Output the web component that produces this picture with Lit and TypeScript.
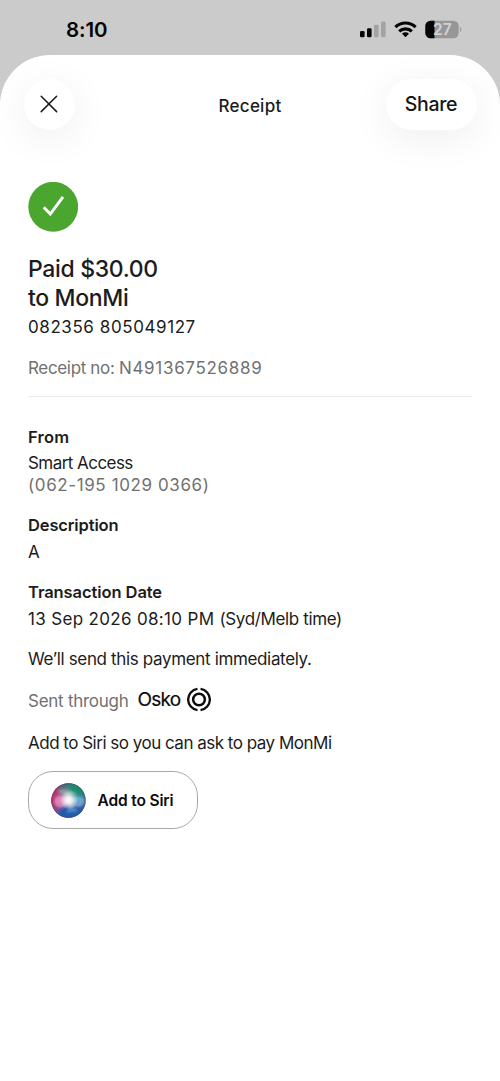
import { LitElement, html, css } from "lit";
import { customElement } from "lit/decorators.js";

@customElement("status-bar")
class StatusBar extends LitElement {
  static styles = css`
    :host { display: flex; justify-content: space-between; align-items: flex-start; height: 55px; box-sizing: border-box; padding: 0 38px 0 66px; }
    .time { font-size: 20.5px; line-height: 24px; margin-top: 18px; font-weight: 600; letter-spacing: -0.1px; color: #050505; }
    svg { display: block; margin-top: 18px; }
    .pct { font: 600 15.5px Inter, "Liberation Sans", sans-serif; fill: #d2d2d2; }
  `;
  render() {
    return html`
      <span class="time">8:10</span>
      <svg width="102" height="24" viewBox="360 18 102 24">
        <rect x="360" y="31" width="4.6" height="6.3" rx="1.3" fill="#050505" />
        <rect x="367" y="28.3" width="4.6" height="9" rx="1.3" fill="#050505" />
        <rect x="374" y="24.8" width="4.6" height="12.5" rx="1.3" fill="#a3a3a3" />
        <rect x="381" y="21.5" width="4.6" height="15.8" rx="1.3" fill="#a3a3a3" />
        <g fill="none" stroke="#050505" stroke-width="3.2">
          <path d="M395.4 27.2a14.3 14.3 0 0 1 20.2 0" />
          <path d="M399.2 31.4a8.9 8.9 0 0 1 12.6 0" />
        </g>
        <path d="M405.5 37.3l-3.5-3.5a4.95 4.95 0 0 1 7 0z" fill="#050505" />
        <rect x="425.3" y="20.7" width="33.4" height="17.6" rx="5.2" fill="#979797" />
        <path d="M434.5 20.7h-4a5.2 5.2 0 0 0-5.2 5.2v7.2a5.2 5.2 0 0 0 5.2 5.2h4z" fill="#050505" />
        <path d="M460 26.8c2 .8 2 4.6 0 5.4z" fill="#a3a3a3" />
        <text class="pct" x="442.3" y="35.2" text-anchor="middle">27</text>
      </svg>
    `;
  }
}

@customElement("siri-orb")
class SiriOrb extends LitElement {
  static styles = css`
    :host { display: block; width: 35px; height: 35px; }
    svg { display: block; }
  `;
  render() {
    return html`
      <svg width="35" height="35" viewBox="0 0 35 35">
        <defs>
          <clipPath id="c"><circle cx="17.5" cy="17.5" r="17.2" /></clipPath>
          <filter id="b" x="-50%" y="-50%" width="200%" height="200%"><feGaussianBlur stdDeviation="2.2" /></filter>
          <filter id="s" x="-50%" y="-50%" width="200%" height="200%"><feGaussianBlur stdDeviation="0.8" /></filter>
          <radialGradient id="g"><stop offset="0" stop-color="#fff" /><stop offset=".35" stop-color="#fff" stop-opacity=".85" /><stop offset="1" stop-color="#fff" stop-opacity="0" /></radialGradient>
        </defs>
        <g clip-path="url(#c)">
          <rect width="35" height="35" fill="#47577f" />
          <g filter="url(#b)">
            <path d="M0 4h10l3 12-6 14H0z" fill="#a83a72" />
            <path d="M13-2h22v16l-14 2z" fill="#1f8a72" />
            <path d="M6 25l12-3 17 2v14H8z" fill="#205cab" />
            <path d="M7 5l9 0 3 8-9-1z" fill="#7d7f8c" />
            <ellipse cx="28" cy="18" rx="6" ry="4" fill="#62a9dc" />
            <ellipse cx="9.5" cy="18" rx="6" ry="5" fill="#e06cab" />
          </g>
          <g filter="url(#s)">
            <path d="M6 9c7-4 15-3 22 3-7-2-11 0-11 5-2-4-6-7-11-8z" fill="#9fcfc6" opacity=".45" />
            <path d="M4 19c0-8 10-7 14-1 4 4 11 5 13 0 0 7-8 7-13 2-4 6-14 6-14-1z" fill="#e9b4de" opacity=".35" />
            <circle cx="9.5" cy="18.5" r="5" fill="none" stroke="#f0b3d8" stroke-width="1" opacity=".5" />
            <path d="M18 18l9 10-11 2z" fill="#80b4e4" opacity=".5" />
            <ellipse cx="27.5" cy="18.5" rx="4.5" ry="3.5" fill="none" stroke="#a6d8f2" stroke-width="1" opacity=".6" />
          </g>
          <circle cx="18" cy="17" r="9.5" fill="url(#g)" />
        </g>
        <circle cx="17.5" cy="17.5" r="16.7" fill="none" stroke="#55406e" stroke-opacity=".45" stroke-width="1" />
        <path d="M1.3 20A16.5 16.5 0 0 1 8.5 3.7" fill="none" stroke="#c22a5a" stroke-width="1.3" />
      </svg>
    `;
  }
}

@customElement("app-root")
class AppRoot extends LitElement {
  static styles = css`
    :host { display: block; height: 1081px; background: #cbcbcb; font-family: Inter, "Liberation Sans", sans-serif; color: #1c1c1c; overflow: hidden; }
    .sheet { background: #fff; height: 1026px; border-radius: 50px 50px 0 0; overflow: hidden; }
    .bar { display: grid; grid-template-columns: 91px 1fr 91px; align-items: center; height: 50px; padding: 23.5px 23.5px 0; }
    button { font-family: inherit; border: 0; background: #fff; padding: 0; margin: 0; display: flex; align-items: center; justify-content: center; color: #151515; }
    .close { width: 51px; height: 51px; border-radius: 50%; box-shadow: 0 8px 40px rgba(0,0,0,.07); }
    .share { width: 91px; height: 51px; border-radius: 26px; font-size: 19.5px; font-weight: 500; letter-spacing: -0.3px; box-shadow: 0 8px 40px rgba(0,0,0,.07); }
    .share span { margin-top: -1px; }
    .title { text-align: center; font-size: 17px; font-weight: 500; margin: 3.5px 0 0; line-height: 22px; letter-spacing: 0.25px; }
    .body { padding: 53px 28px 0; }
    .ok { display: block; margin-bottom: 23px; }
    h1 { margin: 0; font-size: 23px; line-height: 29px; font-weight: 500; letter-spacing: -0.34px; }
    p, h2 { margin: 0; font-size: 17px; line-height: 22px; font-weight: 400; white-space: nowrap; }
    h2 { font-weight: 600; font-size: 16.5px; }
    .muted { color: #717171; }
    .acct { margin-top: 3px; letter-spacing: 0.58px; }
    .receipt { margin-top: 19px; padding-bottom: 17px; border-bottom: 1px solid #e9e9e9; letter-spacing: -0.34px; }
    .digits { letter-spacing: 0.69px; }
    .from { margin-top: 29.5px; letter-spacing: 0.2px; }
    .value { margin-top: 4.5px; }
    .smart { margin-top: 4px; letter-spacing: -0.55px; }
    .num { letter-spacing: 0.6px; }
    .next { margin-top: 18.5px; }
    .desc { margin-top: 18px; letter-spacing: -0.14px; }
    .trans { letter-spacing: -0.08px; }
    .date { letter-spacing: 0.33px; }
    .zone { letter-spacing: -0.37px; }
    .send { letter-spacing: -0.35px; }
    .sent { display: flex; align-items: center; margin-top: 19.5px; }
    .through { letter-spacing: -0.26px; }
    .osko { font-size: 19px; font-weight: 400; color: #0c0c0c; -webkit-text-stroke: 0.2px #0c0c0c; margin-left: 9px; line-height: 22px; margin-top: -1px; letter-spacing: -0.75px; }
    .mark { margin: -3px 0 0 6px; }
    .ask { margin-top: 20.5px; letter-spacing: -0.5px; }
    .siri { width: 170px; height: 58px; box-sizing: border-box; border: 1px solid #a9a9a9; border-radius: 25px; margin-top: 17px; gap: 12px; font-size: 15.5px; font-weight: 600; color: #0b0b0b; letter-spacing: -0.15px; }
    .siri span { margin: 1px 2px 0 0; }
  `;
  render() {
    return html`
      <status-bar></status-bar>
      <main class="sheet">
        <header class="bar">
          <button class="close" aria-label="Close">
            <svg width="18" height="18" viewBox="0 0 18 18"><path d="M1.2 1.2L16.6 16.6M16.6 1.2L1.2 16.6" stroke="#1a1a1a" stroke-width="1.5" stroke-linecap="round" /></svg>
          </button>
          <h2 class="title">Receipt</h2>
          <button class="share"><span>Share</span></button>
        </header>
        <section class="body">
          <svg class="ok" width="50" height="50" viewBox="0 0 50 50">
            <circle cx="25.2" cy="24.8" r="24.9" fill="#4aa62e" />
            <path d="M15.7 25.2l6.6 6.9L35 14.9" fill="none" stroke="#fff" stroke-width="2.9" />
          </svg>
          <h1>Paid $30.00<br />to MonMi</h1>
          <p class="acct">082356 805049127</p>
          <p class="receipt muted">Receipt no: <span class="digits">N491367526889</span></p>
          <h2 class="from">From</h2>
          <p class="smart">Smart Access</p>
          <p class="num muted">(062-195 1029 0366)</p>
          <h2 class="desc">Description</h2>
          <p class="value">A</p>
          <h2 class="next trans">Transaction Date</h2>
          <p class="value date">13 Sep 2026 08:10 PM <span class="zone">(Syd/Melb time)</span></p>
          <p class="next send">We’ll send this payment immediately.</p>
          <div class="sent">
            <p class="muted through">Sent through</p>
            <span class="osko">Osko</span>
            <svg class="mark" width="24" height="25" viewBox="0 0 25 26">
              <g fill="none" stroke="#0c0c0c" stroke-width="2.4">
                <circle cx="12.5" cy="13" r="6.1" stroke-width="2.6" />
                <path d="M10.9 1.9A11.2 11.2 0 0 0 10.9 24.1M14.1 1.9A11.2 11.2 0 0 1 14.1 24.1" />
              </g>
            </svg>
          </div>
          <p class="ask">Add to Siri so you can ask to pay MonMi</p>
          <button class="siri"><siri-orb></siri-orb><span>Add to Siri</span></button>
        </section>
      </main>
    `;
  }
}
